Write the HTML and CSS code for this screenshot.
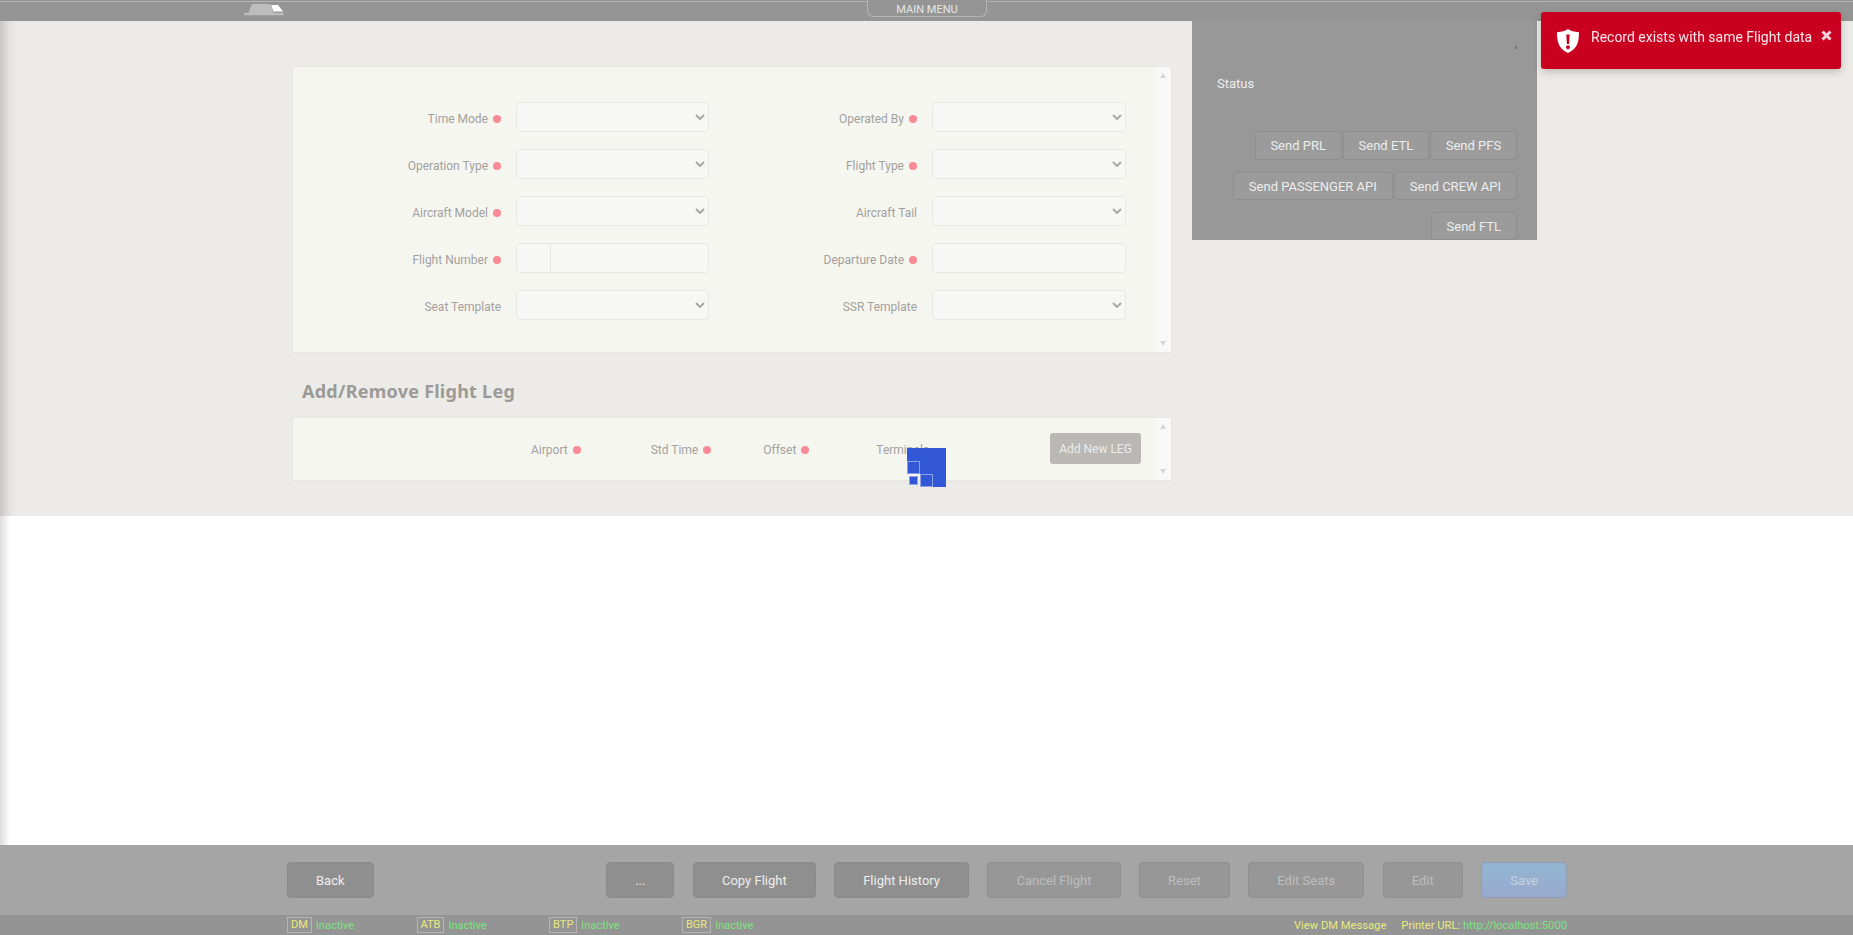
FILE: index.html
```html
<!DOCTYPE html>
<html lang="en">
<head>
<meta charset="utf-8">
<title>Flight</title>
<link rel="stylesheet" href="styles.css">
</head>
<body>
<header class="topbar">
  <svg class="logo" width="40" height="12" viewBox="0 0 40 12"><path d="M0 8.700h4.500L8 0h18l3.500 8.700h10v2.600H0z" fill="#bdbdbd"/><path d="M27 1h7l5 6.500h-9.500z" fill="#fff"/></svg>
  <div class="menu-tab">MAIN MENU</div>
</header>
<main class="main">
  <div class="left-col">
    <section class="panel form-panel">
      <div class="form-grid">
        <div class="field"><label class="req">Time Mode</label><div class="sel"><select></select><svg class="chev" width="10" height="6" viewBox="0 0 10 6"><path d="M1 1l4 4 4-4" fill="none" stroke="#a8a8a6" stroke-width="2"/></svg></div></div>
        <div class="field"><label class="req">Operated By</label><div class="sel"><select></select><svg class="chev" width="10" height="6" viewBox="0 0 10 6"><path d="M1 1l4 4 4-4" fill="none" stroke="#a8a8a6" stroke-width="2"/></svg></div></div>
        <div class="field"><label class="req">Operation Type</label><div class="sel"><select></select><svg class="chev" width="10" height="6" viewBox="0 0 10 6"><path d="M1 1l4 4 4-4" fill="none" stroke="#a8a8a6" stroke-width="2"/></svg></div></div>
        <div class="field"><label class="req">Flight Type</label><div class="sel"><select></select><svg class="chev" width="10" height="6" viewBox="0 0 10 6"><path d="M1 1l4 4 4-4" fill="none" stroke="#a8a8a6" stroke-width="2"/></svg></div></div>
        <div class="field"><label class="req">Aircraft Model</label><div class="sel"><select></select><svg class="chev" width="10" height="6" viewBox="0 0 10 6"><path d="M1 1l4 4 4-4" fill="none" stroke="#a8a8a6" stroke-width="2"/></svg></div></div>
        <div class="field"><label>Aircraft Tail</label><div class="sel"><select></select><svg class="chev" width="10" height="6" viewBox="0 0 10 6"><path d="M1 1l4 4 4-4" fill="none" stroke="#a8a8a6" stroke-width="2"/></svg></div></div>
        <div class="field"><label class="req">Flight Number</label><div class="split"><input class="split-a" type="text"><input class="split-b" type="text"></div></div>
        <div class="field"><label class="req">Departure Date</label><input class="text" type="text"></div>
        <div class="field"><label>Seat Template</label><div class="sel"><select></select><svg class="chev" width="10" height="6" viewBox="0 0 10 6"><path d="M1 1l4 4 4-4" fill="none" stroke="#a8a8a6" stroke-width="2"/></svg></div></div>
        <div class="field"><label>SSR Template</label><div class="sel"><select></select><svg class="chev" width="10" height="6" viewBox="0 0 10 6"><path d="M1 1l4 4 4-4" fill="none" stroke="#a8a8a6" stroke-width="2"/></svg></div></div>
      </div>
      <div class="scroll"><span class="up"></span><span class="down"></span></div>
    </section>
    <h2 class="leg-title">Add/Remove Flight Leg</h2>
    <section class="panel leg-panel">
      <div class="leg-row">
        <span class="leg-head req airport">Airport</span>
        <span class="leg-head req stdtime">Std Time</span>
        <span class="leg-head req offset">Offset</span>
        <span class="leg-head terminals">Terminals</span>
        <button class="add-leg" type="button">Add New LEG</button>
        <div class="spinner"><i class="sq-a"></i><i class="sq-gap"><b></b></i><i class="sq-c"></i></div>
      </div>
      <div class="scroll"><span class="up"></span><span class="down"></span></div>
    </section>
  </div>
  <aside class="side">
    <div class="mark"></div>
    <div class="status">Status</div>
    <div class="send-row r1"><button type="button">Send PRL</button><button type="button">Send ETL</button><button type="button">Send PFS</button></div>
    <div class="send-row r2"><button type="button">Send PASSENGER API</button><button type="button">Send CREW API</button></div>
    <div class="send-row r3"><button type="button">Send FTL</button></div>
  </aside>
</main>
<div class="blank"></div>
<footer>
  <div class="actions">
    <button class="act" type="button">Back</button>
    <button class="act more" type="button">...</button>
    <button class="act" type="button">Copy Flight</button>
    <button class="act" type="button">Flight History</button>
    <button class="act off" type="button">Cancel Flight</button>
    <button class="act off" type="button">Reset</button>
    <button class="act off" type="button">Edit Seats</button>
    <button class="act off" type="button">Edit</button>
    <button class="act save" type="button">Save</button>
  </div>
  <div class="statusbar">
    <span class="dev"><b>DM</b><em>Inactive</em></span>
    <span class="dev"><b>ATB</b><em>Inactive</em></span>
    <span class="dev"><b>BTP</b><em>Inactive</em></span>
    <span class="dev"><b>BGR</b><em>Inactive</em></span>
    <span class="info">View DM Message</span>
    <span class="info printer">Printer URL: <em>http://localhost:5000</em></span>
  </div>
</footer>
<div class="toast">
  <svg class="shield" width="22" height="24" viewBox="0 0 22 24"><path fill-rule="evenodd" fill="#fff" d="M11 0c2.500 1.800 6 3 11 3.200 0 9-1.500 16.500-11 20.800C1.500 19.700 0 12.200 0 3.200 5 3 8.500 1.800 11 0zM9.300 5.500l.6 9.500h2.200l.6-9.500zM11 16.300a2 2 0 1 0 0 4 2 2 0 0 0 0-4z"/></svg>
  <span class="toast-msg">Record exists with same Flight data</span>
  <svg class="close" width="11" height="11" viewBox="0 0 11 11"><path d="M1.500 1.500l8 8m0-8l-8 8" stroke="#f6d3da" stroke-width="3"/></svg>
</div>
</body>
</html>
```
FILE: styles.css
```css
* { box-sizing: border-box; }
html, body { margin: 0; height: 100%; }
body {
  display: flex;
  flex-direction: column;
  height: 935px;
  overflow: hidden;
  font-family: Roboto, "Liberation Sans", sans-serif;
  font-size: 12px;
  color: #a3a19e;
  background: #fff;
}
button { font-family: inherit; font-size: 13px; cursor: default; }

.topbar {
  flex: none;
  height: 21px;
  display: flex;
  align-items: flex-start;
  padding-left: 244px;
  background: #959595;
  box-shadow: inset 0 1px #959595, inset 0 2px #b4b4b4;
}
.logo { margin-top: 4px; }
.menu-tab {
  width: 120px;
  height: 17px;
  margin-left: 583px;
  border: 1px solid #b4b4b4;
  border-top: 0;
  border-radius: 0 0 6px 6px;
  background: #959595;
  color: #e6e6e6;
  font-size: 11px;
  line-height: 20px;
  text-align: center;
}

.main {
  flex: none;
  height: 495px;
  display: flex;
  align-items: flex-start;
  padding-left: 292px;
  background: linear-gradient(to right, #c6c6c4, #e4e3df 10px, #ecebe7 18px);
}
.left-col { width: 880px; padding-top: 45px; }
.panel {
  display: flex;
  background: #f6f6f0;
  border: 1px solid #e6e6e2;
}
.form-panel { height: 287px; }
.form-grid {
  flex: 1;
  display: grid;
  grid-template-columns: 416px 417px;
  grid-auto-rows: 30px;
  row-gap: 17px;
  padding-top: 35px;
}
.field {
  display: grid;
  grid-template-columns: 1fr 193px;
  column-gap: 15px;
  align-items: center;
}
.field:nth-child(even) { grid-template-columns: 1fr 194px; }
.field label, .leg-head { white-space: nowrap; line-height: 15px; }
.field label { text-align: right; padding-top: 4px; }
.req::after {
  content: "";
  display: inline-block;
  width: 8px;
  height: 8px;
  margin-left: 5px;
  border-radius: 50%;
  background: #f98a96;
}
.sel { position: relative; height: 30px; }
select, .text, .split {
  display: block;
  width: 100%;
  height: 30px;
  border: 1px solid #e7e7e5;
  border-radius: 4px;
  background: #f7f7f6;
}
select { appearance: none; }
.chev { position: absolute; right: 4px; top: 12px; }
.split { display: flex; overflow: hidden; }
.split input { height: 28px; border: 0; padding: 0; background: transparent; }
.split-a { width: 34px; border-right: 1px solid #e7e7e5 !important; }
.split-b { flex: 1; min-width: 0; }

.scroll {
  flex: none;
  width: 16px;
  display: flex;
  flex-direction: column;
  justify-content: space-between;
  align-items: center;
  padding: 6px 0;
  background: #f8f8f6;
}
.up, .down { width: 0; height: 0; border-left: 3.500px solid transparent; border-right: 3.500px solid transparent; }
.up { border-bottom: 5px solid #d6d6d4; }
.down { border-top: 5px solid #d6d6d4; }

.leg-title {
  margin: 0;
  height: 64px;
  padding: 26px 0 0 10px;
  font-family: "Noto Sans", "Liberation Sans", sans-serif;
  font-size: 18px;
  font-weight: 700;
  line-height: 24px;
  letter-spacing: .25px;
  color: #9c9a98;
}
.leg-panel { height: 64px; }
.leg-row { flex: 1; position: relative; display: flex; align-items: flex-start; padding-top: 25px; }
.airport { margin-left: 238px; }
.stdtime { margin-left: 70px; }
.offset { margin-left: 52px; }
.terminals { margin-left: 67px; }
.add-leg {
  position: absolute;
  left: 757px;
  top: 15px;
  width: 91px;
  height: 31px;
  padding: 0;
  border: 0;
  border-radius: 3px;
  background: #b9b8b5;
  color: #ebebe9;
  font-size: 12px;
}
.spinner {
  position: absolute;
  left: 614px;
  top: 30px;
  width: 39px;
  height: 39px;
  background:
    linear-gradient(#3258d8, #3258d8) top left / 100% 26px no-repeat,
    linear-gradient(#3258d8, #3258d8) bottom right / 26px 13px no-repeat;
}
.spinner i { position: absolute; display: block; }
.sq-a { left: 0; top: 13px; width: 13px; height: 13px; border: 1px solid #8ea2e6; }
.sq-gap { left: 0; top: 26px; width: 13px; height: 13px; }
.sq-gap b { display: block; width: 9px; height: 9px; margin: 2px 0 0 2px; background: #3258d8; border: 1px solid #8ea2e6; }
.sq-c { left: 13px; top: 26px; width: 13px; height: 13px; border: 1px solid #8ea2e6; }

.side {
  flex: none;
  width: 345px;
  height: 219px;
  margin-left: 20px;
  padding: 25px 20px 0 25px;
  overflow: hidden;
  background: #989898;
  color: #eee;
  font-size: 13px;
}
.mark { width: 2px; height: 3px; margin-left: auto; background: #767676; }
.status { margin-top: 27px; line-height: 15px; }
.send-row { display: flex; justify-content: flex-end; gap: 1px; margin-top: 12px; }
.r1 { margin-top: 40px; }
.side button {
  height: 29px;
  padding: 0 15px;
  border: 1px solid #8e8e8e;
  border-radius: 3px;
  background: #9b9b9b;
  color: #ededed;
}
.side .r1 button { padding: 0 14.800px; }
.side .r2 button { height: 28px; }
.side .r3 button { height: 28px; }

.blank { flex: 1; background: linear-gradient(to right, #dcdcdc, #fff 10px); }

footer { flex: none; }
.actions {
  height: 70px;
  display: flex;
  align-items: center;
  gap: 18.500px;
  padding: 0 286px 0 287px;
  background: #a5a5a5;
}
.act {
  height: 36px;
  padding: 0 28px;
  border: 1px solid #8a8a8a;
  border-radius: 4px;
  background: #8f8f8f;
  color: #eee;
}
.more { margin-left: auto; }
.act.off { background: #979797; border-color: #8f8f8f; color: #bdbdbd; }
.act.save { background: linear-gradient(#92b6d2, #98a9cd); border-color: #8f9bb0; color: #c8d3e2; }

.statusbar {
  height: 20px;
  display: flex;
  align-items: center;
  gap: 62.500px;
  padding: 0 286px 0 287px;
  background: #949494;
  font-size: 11px;
}
.dev { display: flex; align-items: center; gap: 4px; }
.dev b {
  height: 16px;
  padding: 0 3px;
  border: 1px solid #b4b4b0;
  color: #e9e97c;
  font-weight: 400;
  line-height: 14px;
}
em { font-style: normal; color: #79e47d; }
.info { color: #e9e97c; font-size: 11.200px; }
.dev + .info { margin-left: auto; }
.printer { margin-left: -47.500px; }

.toast {
  position: fixed;
  top: 12px;
  right: 12px;
  width: 300px;
  height: 57px;
  display: flex;
  align-items: flex-start;
  padding: 17px 9px 0 16px;
  border-radius: 3px;
  background: #ca0021;
  box-shadow: 0 3px 8px rgba(0, 0, 0, .2);
  color: #fbe6ea;
  font-size: 14px;
}
.shield { flex: none; }
.toast-msg { margin-left: 12px; line-height: 16px; white-space: nowrap; }
.close { margin-left: auto; margin-top: 1px; }
```
